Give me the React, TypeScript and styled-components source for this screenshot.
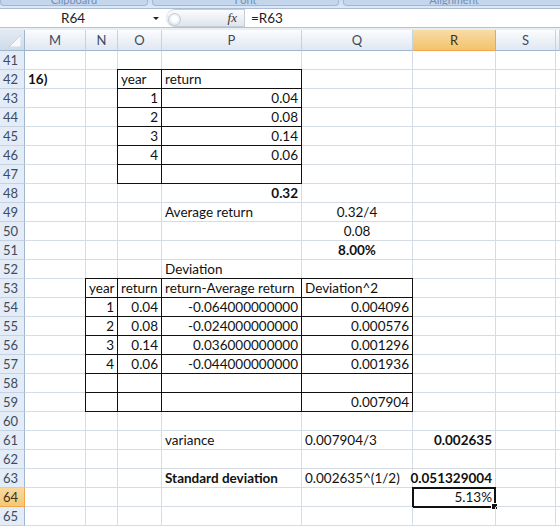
import styled, { createGlobalStyle } from 'styled-components';

const GlobalStyle = createGlobalStyle`
  html, body {
    margin: 0;
    padding: 0;
    background: #ffffff;
  }
  body {
    width: 560px;
    height: 526px;
    overflow: hidden;
    font-family: Lato, 'Liberation Sans', sans-serif;
  }
`;

const COLS = '25px 61px 32px 44px 140px 111px 83px 60px 1fr';
const LETTERS = ['M', 'N', 'O', 'P', 'Q', 'R', 'S', 'T'] as const;
type Col = (typeof LETTERS)[number];

type CellSpec = {
  t?: string;
  a?: 'l' | 'r' | 'c';
  b?: boolean;
  box?: boolean;
  sel?: boolean;
};

const boxRow = (cols: Col[], vals: Partial<Record<Col, CellSpec>> = {}) => {
  const out: Partial<Record<Col, CellSpec>> = {};
  cols.forEach((c) => {
    out[c] = { ...(vals[c] || {}), box: true };
  });
  return out;
};

const sheet: Record<number, Partial<Record<Col, CellSpec>>> = {
  42: { M: { t: '16)', b: true }, ...boxRow(['O', 'P'], { O: { t: 'year' }, P: { t: 'return' } }) },
  43: boxRow(['O', 'P'], { O: { t: '1', a: 'r' }, P: { t: '0.04', a: 'r' } }),
  44: boxRow(['O', 'P'], { O: { t: '2', a: 'r' }, P: { t: '0.08', a: 'r' } }),
  45: boxRow(['O', 'P'], { O: { t: '3', a: 'r' }, P: { t: '0.14', a: 'r' } }),
  46: boxRow(['O', 'P'], { O: { t: '4', a: 'r' }, P: { t: '0.06', a: 'r' } }),
  47: boxRow(['O', 'P']),
  48: { P: { t: '0.32', a: 'r', b: true } },
  49: { P: { t: 'Average return' }, Q: { t: '0.32/4', a: 'c' } },
  50: { Q: { t: '0.08', a: 'c' } },
  51: { Q: { t: '8.00%', a: 'c', b: true } },
  52: { P: { t: 'Deviation' } },
  53: boxRow(['N', 'O', 'P', 'Q'], {
    N: { t: 'year' },
    O: { t: 'return' },
    P: { t: 'return-Average return' },
    Q: { t: 'Deviation^2' },
  }),
  54: boxRow(['N', 'O', 'P', 'Q'], {
    N: { t: '1', a: 'r' },
    O: { t: '0.04', a: 'r' },
    P: { t: '-0.064000000000', a: 'r' },
    Q: { t: '0.004096', a: 'r' },
  }),
  55: boxRow(['N', 'O', 'P', 'Q'], {
    N: { t: '2', a: 'r' },
    O: { t: '0.08', a: 'r' },
    P: { t: '-0.024000000000', a: 'r' },
    Q: { t: '0.000576', a: 'r' },
  }),
  56: boxRow(['N', 'O', 'P', 'Q'], {
    N: { t: '3', a: 'r' },
    O: { t: '0.14', a: 'r' },
    P: { t: '0.036000000000', a: 'r' },
    Q: { t: '0.001296', a: 'r' },
  }),
  57: boxRow(['N', 'O', 'P', 'Q'], {
    N: { t: '4', a: 'r' },
    O: { t: '0.06', a: 'r' },
    P: { t: '-0.044000000000', a: 'r' },
    Q: { t: '0.001936', a: 'r' },
  }),
  58: boxRow(['N', 'O', 'P', 'Q']),
  59: boxRow(['N', 'O', 'P', 'Q'], { Q: { t: '0.007904', a: 'r' } }),
  61: { P: { t: 'variance' }, Q: { t: '0.007904/3' }, R: { t: '0.002635', a: 'r', b: true } },
  63: {
    P: { t: 'Standard deviation', b: true },
    Q: { t: '0.002635^(1/2)' },
    R: { t: '0.051329004', a: 'r', b: true },
  },
  64: { R: { t: '5.13%', a: 'r', sel: true } },
};

const ROW_NUMBERS = Array.from({ length: 25 }, (_, i) => 41 + i);

/* ---------- ribbon remnant + formula bar ---------- */

const Window = styled.div`
  width: 560px;
  height: 526px;
  overflow: hidden;
  display: flex;
  flex-direction: column;
  background: #ffffff;
`;

const Ribbon = styled.div`
  height: 10px;
  display: flex;
  gap: 4px;
  background: linear-gradient(#cfdcee, #dfe8f5);
  border-bottom: 1px solid #a8bcd6;
  overflow: hidden;
`;

const GroupLabel = styled.div<{ $w: number }>`
  width: ${(p) => p.$w}px;
  height: 5px;
  flex: none;
  display: flex;
  justify-content: center;
  align-items: flex-start;
  overflow: hidden;
  background: #c4d6ec;
  border: 1px solid #9fb9da;
  border-top: none;
  border-radius: 0 0 4px 4px;
  color: #6f8fba;
  font-size: 11px;
  line-height: 12px;

  span {
    margin-top: -6px;
  }
`;

const FormulaBar = styled.div`
  height: 19px;
  display: flex;
  align-items: stretch;
  background: #ffffff;
  border-bottom: 1px solid #b1c3da;
`;

const NameBox = styled.div`
  width: 146px;
  display: flex;
  align-items: center;
  justify-content: center;
  font-size: 13.5px;
  color: #1e1e1e;
`;

const Drop = styled.div`
  width: 20px;
  display: flex;
  align-items: center;
  justify-content: center;

  &::after {
    content: '';
    border-left: 3px solid transparent;
    border-right: 3px solid transparent;
    border-top: 3px solid #222;
  }
`;

const FxCapsule = styled.div`
  width: 79px;
  display: flex;
  align-items: center;
  justify-content: flex-end;
  padding-right: 7px;
  box-sizing: border-box;
  position: relative;
  background: linear-gradient(#fbfcfd, #dfe5ec);
  border: 1px solid #c3ccd7;
  border-left: none;
  border-radius: 10px 0 0 10px;
  font-family: 'Liberation Serif', serif;
  font-style: italic;
  font-size: 13px;
  color: #333;
`;

const Knob = styled.div`
  position: absolute;
  left: 2px;
  top: 3px;
  width: 11px;
  height: 11px;
  border-radius: 50%;
  border: 1px solid #c4cdd8;
  background: radial-gradient(circle at 50% 45%, #ffffff 30%, #dbe1e8 80%);
`;

const FormulaText = styled.div`
  flex: 1;
  display: flex;
  align-items: center;
  padding-left: 6px;
  font-size: 13.5px;
  color: #1e1e1e;
`;

const Spacer = styled.div`
  height: 2px;
  background: #e9eef5;
`;

/* ---------- grid ---------- */

const Row = styled.div<{ $h: number }>`
  display: grid;
  grid-template-columns: ${COLS};
  height: ${(p) => p.$h}px;
  flex: none;
`;

const Corner = styled.div`
  background: linear-gradient(#e3eaf4, #cfdbea);
  border-right: 1px solid #9eb6ce;
  border-bottom: 1px solid #9eb6ce;
  display: flex;
  align-items: flex-end;
  justify-content: flex-end;
  padding: 0 3px 3px 0;
`;

const ColHead = styled.div<{ $on?: boolean }>`
  display: flex;
  align-items: center;
  justify-content: center;
  font-size: 13px;
  color: ${(p) => (p.$on ? '#3a3320' : '#3d4b5e')};
  background: ${(p) =>
    p.$on ? 'linear-gradient(#f9dba6, #f2c369)' : 'linear-gradient(#fbfcfe, #e0e7f1)'};
  border-right: 1px solid ${(p) => (p.$on ? '#f2a54f' : '#c5d2e2')};
  border-bottom: 1px solid ${(p) => (p.$on ? '#f2a54f' : '#9eb6ce')};
  box-sizing: border-box;
`;

const RowHead = styled.div<{ $on?: boolean }>`
  display: flex;
  align-items: center;
  padding-left: 3px;
  font-size: 13px;
  color: ${(p) => (p.$on ? '#3a3320' : '#3d4b5e')};
  background: ${(p) => (p.$on ? 'linear-gradient(#f9d99f, #f3c873)' : '#e4ecf7')};
  border-right: 1px solid ${(p) => (p.$on ? '#f2a54f' : '#9eb6ce')};
  border-bottom: 1px solid ${(p) => (p.$on ? '#f2a54f' : '#c5d2e2')};
  box-sizing: border-box;
`;

const Cell = styled.div<{ $a: 'l' | 'r' | 'c'; $b?: boolean; $box?: boolean }>`
  position: relative;
  display: flex;
  align-items: center;
  justify-content: ${(p) => (p.$a === 'r' ? 'flex-end' : p.$a === 'c' ? 'center' : 'flex-start')};
  padding: 1px 3px 0 3px;
  box-sizing: border-box;
  min-width: 0;
  white-space: nowrap;
  font-size: 13.5px;
  line-height: 17px;
  font-weight: ${(p) => (p.$b ? 700 : 400)};
  color: #111111;
  border-right: 1px solid ${(p) => (p.$box ? '#111' : '#d6dce6')};
  border-bottom: 1px solid ${(p) => (p.$box ? '#111' : '#d6dce6')};
  box-shadow: ${(p) => (p.$box ? '-1px 0 0 #111, 0 -1px 0 #111, -1px -1px 0 #111' : 'none')};
`;

const Selection = styled.div`
  position: absolute;
  left: -1px;
  top: -1px;
  right: -1px;
  bottom: -2px;
  border: 2px solid #111;
  pointer-events: none;

  &::after {
    content: '';
    position: absolute;
    right: -4px;
    bottom: -4px;
    width: 5px;
    height: 5px;
    background: #111;
    border: 1px solid #fff;
  }
`;

function CornerMark() {
  return (
    <svg width="12" height="12" viewBox="0 0 12 12">
      <polygon points="12,0 12,12 0,12" fill="#f7f9fc" stroke="#b4c4d8" strokeWidth="0.6" />
    </svg>
  );
}

export default function App() {
  return (
    <Window>
      <GlobalStyle />
      <Ribbon>
        <GroupLabel $w={146}>
          <span>Clipboard</span>
        </GroupLabel>
        <GroupLabel $w={185}>
          <span>Font</span>
        </GroupLabel>
        <GroupLabel $w={220}>
          <span>Alignment</span>
        </GroupLabel>
      </Ribbon>
      <FormulaBar>
        <NameBox>R64</NameBox>
        <Drop />
        <FxCapsule>
          <Knob />
          <span>fx</span>
        </FxCapsule>
        <FormulaText>=R63</FormulaText>
      </FormulaBar>
      <Spacer />
      <Row $h={21}>
        <Corner>
          <CornerMark />
        </Corner>
        {LETTERS.map((l) => (
          <ColHead key={l} $on={l === 'R'}>
            {l === 'T' ? '' : l}
          </ColHead>
        ))}
      </Row>
      {ROW_NUMBERS.map((n) => (
        <Row key={n} $h={19}>
          <RowHead $on={n === 64}>{n}</RowHead>
          {LETTERS.map((l) => {
            const c = sheet[n]?.[l] || {};
            return (
              <Cell key={l} $a={c.a || 'l'} $b={c.b} $box={c.box}>
                {c.t}
                {c.sel && <Selection />}
              </Cell>
            );
          })}
        </Row>
      ))}
    </Window>
  );
}
